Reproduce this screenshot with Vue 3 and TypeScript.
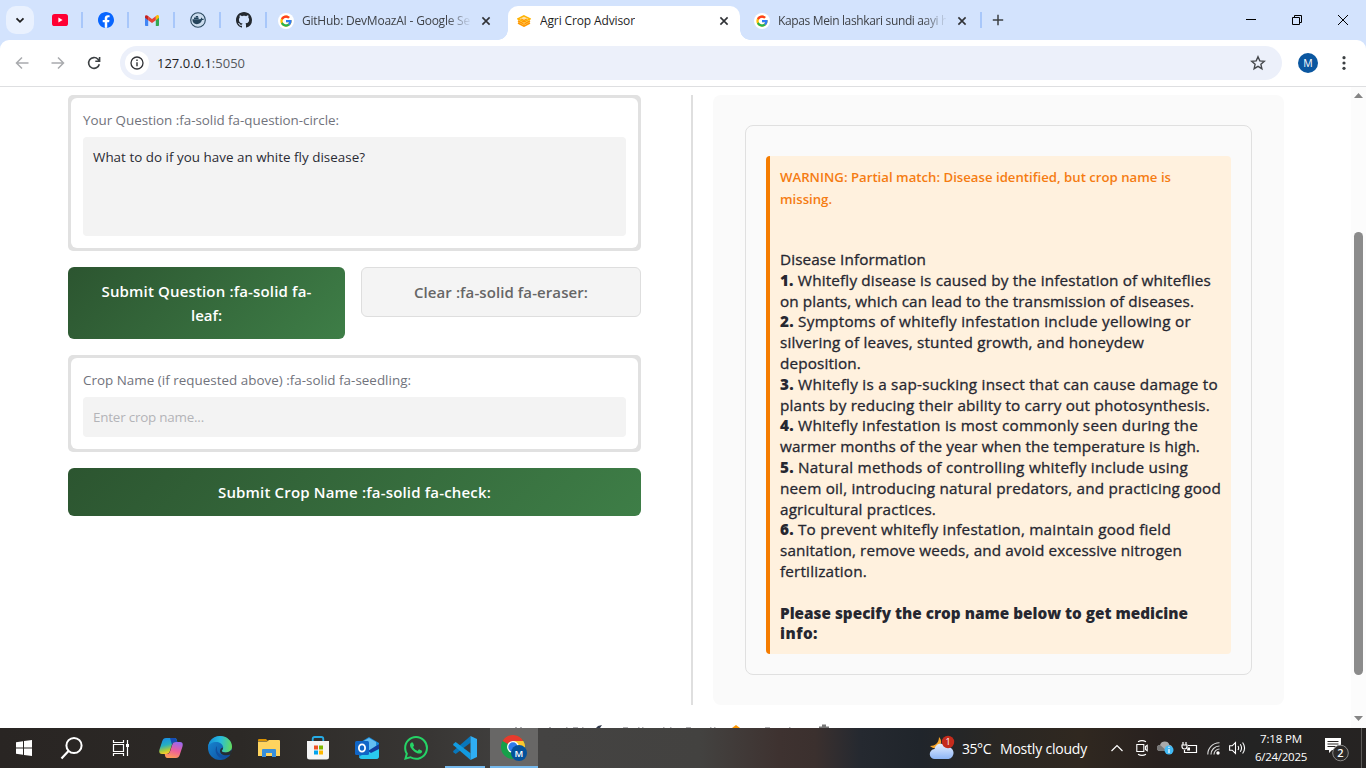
<script setup lang="ts">
interface Line { n?: string; t: string; w: number; strong?: boolean }

// Spreads a line of text evenly so that it fills the given width.
const vFit = {
  mounted(el: HTMLElement, binding: { value: number }) {
    const len = (el.textContent ?? '').trim().length
    if (len > 0) {
      const diff = binding.value - el.getBoundingClientRect().width
      el.style.letterSpacing = `${(diff / len).toFixed(4)}px`
    }
  },
}

const info: Line[] = [
  { t: 'Disease Information', w: 146 },
  { n: '1.', t: 'Whitefly disease is caused by the infestation of whiteflies', w: 431 },
  { t: 'on plants, which can lead to the transmission of diseases.', w: 414 },
  { n: '2.', t: 'Symptoms of whitefly infestation include yellowing or', w: 411 },
  { t: 'silvering of leaves, stunted growth, and honeydew', w: 364 },
  { t: 'deposition.', w: 81 },
  { n: '3.', t: 'Whitefly is a sap-sucking insect that can cause damage to', w: 438 },
  { t: 'plants by reducing their ability to carry out photosynthesis.', w: 430 },
  { n: '4.', t: 'Whitefly infestation is most commonly seen during the', w: 418 },
  { t: 'warmer months of the year when the temperature is high.', w: 420 },
  { n: '5.', t: 'Natural methods of controlling whitefly include using', w: 408 },
  { t: 'neem oil, introducing natural predators, and practicing good', w: 441 },
  { t: 'agricultural practices.', w: 156 },
  { n: '6.', t: 'To prevent whitefly infestation, maintain good field', w: 391 },
  { t: 'sanitation, remove weeds, and avoid excessive nitrogen', w: 402 },
  { t: 'fertilization.', w: 87 },
  { t: '', w: 0 },
  { t: 'Please specify the crop name below to get medicine', w: 408, strong: true },
  { t: 'info:', w: 38, strong: true },
]
</script>

<template>
  <div class="screen">
    <header class="tabs">
      <div class="search-tabs">
        <svg width="28" height="28" viewBox="0 0 28 28"><path d="M10.500 12.300l3.500 3.500 3.500-3.500" fill="none" stroke="#1f1f1f" stroke-width="1.800" /></svg>
      </div>
      <div class="pin">
        <svg width="16" height="12" viewBox="0 0 16 12"><rect width="16" height="12" rx="2.600" fill="#ff0033" /><path d="M6.400 3.500v5l4.200-2.500z" fill="#fff" /></svg>
      </div>
      <div class="pin">
        <svg width="16" height="16" viewBox="0 0 24 24"><circle cx="12" cy="12" r="11" fill="#fff" /><path fill="#0866ff" d="M24 12.073c0-6.627-5.373-12-12-12s-12 5.373-12 12c0 5.990 4.388 10.954 10.125 11.854v-8.385H7.078v-3.470h3.047V9.430c0-3.007 1.792-4.669 4.533-4.669 1.312 0 2.686.235 2.686.235v2.953H15.830c-1.491 0-1.956.925-1.956 1.874v2.250h3.328l-.532 3.470h-2.796v8.385C19.612 23.027 24 18.062 24 12.073z" /></svg>
      </div>
      <div class="pin">
        <svg width="14" height="11" viewBox="0 0 14 11"><path d="M0 1.500v8.700q0 .8.800.8H3.200V4.200z" fill="#4285f4" /><path d="M14 1.500v8.700q0 .8-.8.800H10.800V4.200z" fill="#34a853" /><path d="M10.800 1.200v4L14 2.800V1.600C14 .1 12.300-.5 11.200.7z" fill="#fbbc04" /><path d="M3.200 1.200L7 4l3.800-2.800v4L7 8 3.200 5.200z" fill="#ea4335" /><path d="M0 1.600v1.200l3.200 2.400v-4L2.800.7C1.700-.3 0 .1 0 1.600z" fill="#c5221f" /></svg>
      </div>
      <div class="pin">
        <svg width="16" height="16" viewBox="0 0 16 16"><circle cx="8" cy="8" r="7.300" fill="#cbdcee" stroke="#2c4a60" stroke-width="1.100" /><path d="M2.400 7.300h7.700c.9 0 1.100-.8.900-1.700.8.300 1.200.8 1.300 1.300.6-.1 1.200 0 1.600.3-.5.700-1.200.9-1.900.9-.8 2.500-2.500 4.100-5.200 4.100-2.900 0-4.500-1.900-4.400-4.900zM4 5.600h4.600v1.500H4zM5.800 4h2.300v1.300H5.800z" fill="#24445c" /></svg>
      </div>
      <div class="pin">
        <svg width="16" height="16" viewBox="0 0 16 16"><path fill="#24292f" d="M8 0C3.580 0 0 3.580 0 8c0 3.540 2.290 6.530 5.470 7.590.4.070.55-.17.55-.38 0-.19-.01-.82-.01-1.490-2.010.37-2.530-.49-2.690-.94-.09-.23-.48-.94-.82-1.130-.28-.15-.68-.52-.01-.53.63-.01 1.080.58 1.230.82.72 1.210 1.870.87 2.330.66.07-.52.28-.87.51-1.070-1.780-.2-3.640-.89-3.640-3.950 0-.87.31-1.590.82-2.150-.08-.2-.36-1.020.08-2.120 0 0 .67-.21 2.200.82.64-.18 1.320-.27 2-.27s1.360.09 2 .27c1.530-1.040 2.200-.82 2.200-.82.44 1.100.16 1.920.08 2.120.51.56.82 1.270.82 2.150 0 3.070-1.870 3.750-3.650 3.950.29.25.54.73.54 1.480 0 1.070-.01 1.930-.01 2.200 0 .21.15.46.55.38A8.010 8.010 0 0016 8c0-4.420-3.580-8-8-8z" /></svg>
      </div>
      <div v-for="(tab, i) in [{ t: 'GitHub: DevMoazAI - Google Se', w: 168 }, { t: 'Agri Crop Advisor', w: 95 }, { t: 'Kapas Mein lashkari sundi aayi h', w: 170 }]" :key="i" class="tab" :class="'tab' + i">
        <svg v-if="i !== 1" class="fav" width="16" height="16" viewBox="0 0 64 64">
          <circle cx="32" cy="32" r="32" fill="#fff" />
          <g transform="translate(5 5) scale(1.125)">
            <path fill="#FFC107" d="M43.611,20.083H42V20H24v8h11.303c-1.649,4.657-6.080,8-11.303,8c-6.627,0-12-5.373-12-12c0-6.627,5.373-12,12-12c3.059,0,5.842,1.154,7.961,3.039l5.657-5.657C34.046,6.053,29.268,4,24,4C12.955,4,4,12.955,4,24c0,11.045,8.955,20,20,20c11.045,0,20-8.955,20-20C44,22.659,43.862,21.350,43.611,20.083z" />
            <path fill="#FF3D20" d="M6.306,14.691l6.571,4.819C14.655,15.108,18.961,12,24,12c3.059,0,5.842,1.154,7.961,3.039l5.657-5.657C34.046,6.053,29.268,4,24,4C16.318,4,9.656,8.337,6.306,14.691z" />
            <path fill="#22b455" d="M24,44c5.166,0,9.860-1.977,13.409-5.192l-6.190-5.238C29.211,35.091,26.715,36,24,36c-5.202,0-9.619-3.317-11.283-7.946l-6.522,5.025C9.505,39.556,16.227,44,24,44z" />
            <path fill="#2f7df6" d="M43.611,20.083H42V20H24v8h11.303c-0.792,2.237-2.231,4.166-4.087,5.571l6.190,5.238C36.971,39.205,44,34,44,24C44,22.659,43.862,21.350,43.611,20.083z" />
          </g>
        </svg>
        <svg v-else class="fav" width="14" height="12" viewBox="0 0 14 12"><path d="M7 .7l6 3.100v4.400l-6 3.100-6-3.100V3.800z" fill="#ffe2a6" /><path d="M7 .8l6 3.100-6 3-6-3z" fill="none" stroke="#ffb300" stroke-width="1.500" /><path d="M1 8l6 3.200L13 8M1 5.800l3 1.700M13 5.800l-3 1.700" fill="none" stroke="#ff9800" stroke-width="1.500" /><path d="M4.200 4L7 5.500 9.800 4M4 7.800L7 6.300l3 1.500-3 1.500z" fill="none" stroke="#ff9800" stroke-width="1.200" /></svg>
        <span class="title"><span v-fit="tab.w" class="fit">{{ tab.t }}</span></span>
        <svg class="close" width="10" height="10" viewBox="0 0 10 10"><path d="M1.400 1.400l7.200 7.200M8.600 1.400L1.400 8.600" stroke="#303236" stroke-width="1.600" /></svg>
      </div>
      <div class="new-tab">
        <svg width="12" height="12" viewBox="0 0 12 12"><path d="M6 .8v10.400M.8 6h10.400" stroke="#3c4043" stroke-width="1.500" /></svg>
      </div>
      <div class="win">
        <span><svg width="12" height="12" viewBox="0 0 12 12"><path d="M1 5.500h10" stroke="#000" /></svg></span>
        <span><svg width="12" height="12" viewBox="0 0 12 12"><path d="M1.500 3.500h7v7h-7zM3.500 3.500v-2h7v7h-2" fill="none" stroke="#000" /></svg></span>
        <span><svg width="12" height="12" viewBox="0 0 12 12"><path d="M1 1l10 10M11 1L1 11" stroke="#000" /></svg></span>
      </div>
    </header>

    <div class="toolbar-back">
      <div class="toolbar">
        <div class="nav"><svg width="14" height="14" viewBox="0 0 14 14"><path d="M13.500 7H1.500M7 1.500L1.500 7 7 12.500" fill="none" stroke="#a9abae" stroke-width="1.500" /></svg></div>
        <div class="nav"><svg width="14" height="14" viewBox="0 0 14 14"><path d="M.5 7h12M7 1.500L12.500 7 7 12.500" fill="none" stroke="#a9abae" stroke-width="1.500" /></svg></div>
        <div class="nav"><svg width="14" height="14" viewBox="0 0 14 14"><path d="M12.300 8.200A5.400 5.400 0 1 1 11 3.300L12.400 4.900M12.600 1v4.300H8.300" fill="none" stroke="#3c4043" stroke-width="1.600" /></svg></div>
        <div class="omni">
          <span class="site"><svg width="14" height="14" viewBox="0 0 14 14"><circle cx="7" cy="7" r="6" fill="none" stroke="#303236" stroke-width="1.300" /><path d="M7 6.200v4M7 3.600v1.500" stroke="#303236" stroke-width="1.400" /></svg></span>
          <span class="url"><span v-fit="88" class="fit">127.0.0.1<i>:5050</i></span></span>
          <svg class="star" width="16" height="16" viewBox="0 0 16 16"><path d="M8 1.800l1.800 4.100 4.500.4-3.400 3 1 4.400L8 11.400l-3.900 2.300 1-4.400-3.400-3 4.500-.4z" fill="none" stroke="#45484c" stroke-width="1.400" /></svg>
        </div>
        <div class="me">M</div>
        <svg class="dots" width="4" height="16" viewBox="0 0 4 16"><circle cx="2" cy="2.700" r="1.600" fill="#3c4043" /><circle cx="2" cy="8" r="1.600" fill="#3c4043" /><circle cx="2" cy="13.300" r="1.600" fill="#3c4043" /></svg>
      </div>
    </div>

    <main class="page">
      <section class="form">
        <div class="frame">
          <div class="frame-in">
            <label><span v-fit="256" class="fit">Your Question :fa-solid fa-question-circle:</span></label>
            <div class="field area"><span v-fit="272" class="fit">What to do if you have an white fly disease?</span></div>
          </div>
        </div>
        <div class="row">
          <div class="btn green two"><span v-fit="210" class="fit">Submit Question :fa-solid fa-</span><span v-fit="31" class="fit">leaf:</span></div>
          <div class="btn grey"><span v-fit="174" class="fit">Clear :fa-solid fa-eraser:</span></div>
        </div>
        <div class="frame">
          <div class="frame-in">
            <label><span v-fit="328" class="fit">Crop Name (if requested above) :fa-solid fa-seedling:</span></label>
            <div class="field one"><span v-fit="111" class="fit">Enter crop name...</span></div>
          </div>
        </div>
        <div class="btn green last"><span v-fit="273" class="fit">Submit Crop Name :fa-solid fa-check:</span></div>
      </section>
      <div class="rule"></div>
      <section class="result">
        <div class="outline">
          <div class="notice">
            <div class="warn">
              <div><span v-fit="391" class="fit">WARNING: Partial match: Disease identified, but crop name is</span></div>
              <div><span v-fit="52" class="fit">missing.</span></div>
            </div>
            <div class="info">
              <div v-for="(l, i) in info" :key="i" class="line" :class="{ strong: l.strong }"><span v-fit="l.w" class="fit"><b v-if="l.n">{{ l.n }}</b>{{ l.n ? ' ' : '' }}{{ l.t }}</span></div>
            </div>
          </div>
        </div>
      </section>
      <div class="scroll">
        <svg width="9" height="5" viewBox="0 0 9 5"><path d="M0 5L4.500 0 9 5z" fill="#858585" /></svg>
        <div class="thumb"></div>
        <svg width="9" height="5" viewBox="0 0 9 5"><path d="M0 0h9L4.500 5z" fill="#858585" /></svg>
      </div>
      <svg class="peek" width="320" height="4" viewBox="0 0 320 4">
        <path d="M3 3.500h2M8 3.500h2M37 3.500h2M54 3.500h1.500M61 3.500h5M70 3.500h1.500M111 3.500h5M126 3.500h1.500M130 3.500h1.500M151 3.500h1.500M158 3.500h1.500M174 3.500h5M198 3.500h1.500M202 3.500h1.500M253 3.500h5M277 3.500h1.500" stroke="#b4b4b7" />
        <path d="M84 4l2-2 4-1-2 3z" fill="#30394a" /><path d="M220 4l4-3 4 3z" fill="#ff9800" /><path d="M307 4V2.500h3V.500h4v2h3V4z" fill="#777" />
      </svg>
    </main>

    <footer class="taskbar">
      <div class="apps">
        <span><svg width="16" height="16" viewBox="0 0 16 16"><path d="M0 2.200L7 1.200v6.300H0zM8 1l8-1v7.500H8zM0 8.500h7v6.300l-7-1zM8 8.500h8V16l-8-1.100z" fill="#fff" /></svg></span>
        <span><svg width="24" height="24" viewBox="0 0 24 24"><circle cx="14" cy="9.500" r="7.600" fill="none" stroke="#fff" stroke-width="2" /><path d="M8.500 15L1.500 22.500" stroke="#fff" stroke-width="2.200" /></svg></span>
        <span class="tv"><svg width="18" height="18" viewBox="0 0 18 18"><path d="M1.500 1v2.500h10V1M1.500 17v-2.500h10V17M1.500 5.500h10v7h-10zM15.500 1v16" fill="none" stroke="#fff" stroke-width="1.200" /><path d="M14 5h3v3h-3z" fill="#fff" /></svg></span>
        <span><svg width="24" height="22" viewBox="0 0 24 22">
          <defs><linearGradient id="c1" x1="0" y1="0" x2=".3" y2="1"><stop offset="0" stop-color="#1686ee" /><stop offset=".5" stop-color="#25afc0" /><stop offset=".8" stop-color="#a8ca3d" /><stop offset="1" stop-color="#ffcb28" /></linearGradient><linearGradient id="c2" x1=".6" y1="0" x2=".3" y2="1"><stop offset="0" stop-color="#9c68ed" /><stop offset=".5" stop-color="#ee5e9b" /><stop offset="1" stop-color="#ff9d55" /></linearGradient></defs>
          <path d="M7 1h8.500c2 0 2.200 1.500 2.800 4h-2c-2.300 0-3 1-3.500 3l-1.700 5.500c-.7 2.300-1.600 3.500-4 3.500H3c-2.700 0-3.200-2-2.500-4.500L3.300 4C4 2 5 1 7 1z" fill="url(#c1)" /><path d="M11 1h4.500c2 0 2.200 1.500 2.800 4h-2c-2 0-2.800.8-3.400 2.500z" fill="#164db5" /><path d="M17 21H8.500c-2 0-2.300-1.600-2.800-4h2c2.300 0 3-1.200 3.600-3.200L13 8.500C13.700 6 14.700 5 17 5h4c2.700 0 3.100 2 2.500 4.400L20.700 18c-.7 2-1.700 3-3.700 3z" fill="url(#c2)" /></svg></span>
        <span><svg width="24" height="24" viewBox="0 0 24 24">
          <defs><linearGradient id="e1" x1="0" y1=".4" x2="1" y2=".5"><stop offset="0" stop-color="#168ed8" /><stop offset=".5" stop-color="#28bcdd" /><stop offset="1" stop-color="#64db5c" /></linearGradient><linearGradient id="e2" x1="0" y1="0" x2="1" y2="1"><stop offset="0" stop-color="#198bd5" /><stop offset="1" stop-color="#0b4a9b" /></linearGradient></defs>
          <circle cx="12" cy="12" r="12" fill="url(#e2)" /><path d="M0 11C.8 4.500 6 0 12 0c7 0 12 5 12 10.500 0 4-3 6-6.500 6-2.400 0-3.700-.8-3.700-1.700 0-.7 1.400-1.200 1.400-3.300C15.200 8.500 12 6 8.500 6 4 6 1 8 0 11z" fill="url(#e1)" /><path d="M9 10c-3.500 4.500 0 12 6 12.500 3 0 6-1.800 7.500-4-1.500.8-3 1.200-5 1.200-5 0-8.500-3-8.500-6.500z" fill="#114f9f" /><path d="M13.800 14.800c0 1 1.400 1.700 3.700 1.700 2.200 0 4.600-.8 5.700-2.700l.7 1.200-1.400 3.500c-3.500 1.500-8.500 1-10-1.800-1.200-2.200.2-4.500 2.300-5.200.3 1.500-.2 2-.6 2.400-.3.300-.4.500-.4.900z" fill="#29241f" opacity=".85" /></svg></span>
        <span><svg width="22" height="20" viewBox="0 0 22 20"><path d="M0 3V1.500Q0 1 1 1h7l2 2z" fill="#db9200" /><path d="M0 3.500h9l2-1.500h10q1 0 1 1v15H0z" fill="#ffd45f" /><path d="M4 19v-7q0-1 1-1h12q1 0 1 1v7h-4v-4H8v4z" fill="#388fdb" /></svg></span>
        <span><svg width="24" height="24" viewBox="0 0 24 24"><path d="M6.700 7V3q0-2 2-2h6.600q2 0 2 2v4" fill="none" stroke="#26ace6" stroke-width="1.800" /><path d="M1 5h22v16q0 2.500-2.500 2.500h-17Q1 23.500 1 21z" fill="#f5f5f5" /><path d="M8 9.500h4v4H8z" fill="#f05123" /><path d="M13 9.500h4v4h-4z" fill="#7eb900" /><path d="M8 14.500h4v4H8z" fill="#00a3ee" /><path d="M13 14.500h4v4h-4z" fill="#ffb800" /></svg></span>
        <span><svg width="24" height="22" viewBox="0 0 24 22"><path d="M4 6L14 0l10 6v13q0 3-3 3H7q-3 0-3-3z" fill="#1687d9" /><path d="M7 5l7-4 7 4v8H7z" fill="#62bdf2" /><path d="M24 7v12q0 3-3 3H7q-2 0-3-2z" fill="#2ac8ee" /><path d="M24 7L13 14l3 2 8-4z" fill="#123c9e" /><rect y="4" width="14" height="14" rx="1.500" fill="#1066c7" /><ellipse cx="7" cy="11" rx="3.100" ry="3.600" fill="none" stroke="#fff" stroke-width="1.800" /></svg></span>
        <span><svg width="24" height="24" viewBox="0 0 24 24"><path fill="#25d366" d="M17.472 14.382c-.297-.149-1.758-.867-2.030-.967-.273-.099-.471-.148-.67.150-.197.297-.767.966-.94 1.164-.173.199-.347.223-.644.075-.297-.15-1.255-.463-2.390-1.475-.883-.788-1.480-1.761-1.653-2.059-.173-.297-.018-.458.130-.606.134-.133.298-.347.446-.52.149-.174.198-.298.298-.497.099-.198.050-.371-.025-.52-.075-.149-.669-1.612-.916-2.207-.242-.579-.487-.5-.669-.510-.173-.008-.371-.010-.570-.010-.198 0-.52.074-.792.372-.272.297-1.040 1.016-1.040 2.479 0 1.462 1.065 2.875 1.213 3.074.149.198 2.096 3.200 5.077 4.487.709.306 1.262.489 1.694.625.712.227 1.360.195 1.871.118.571-.085 1.758-.719 2.006-1.413.248-.694.248-1.289.173-1.413-.074-.124-.272-.198-.570-.347m-5.421 7.403h-.004a9.870 9.870 0 01-5.031-1.378l-.361-.214-3.741.982.998-3.648-.235-.374a9.860 9.860 0 01-1.510-5.260c.001-5.450 4.436-9.884 9.888-9.884 2.640 0 5.122 1.030 6.988 2.898a9.825 9.825 0 012.893 6.994c-.003 5.450-4.437 9.884-9.885 9.884m8.413-18.297A11.815 11.815 0 0012.050 0C5.495 0 .160 5.335.157 11.892c0 2.096.547 4.142 1.588 5.945L.057 24l6.305-1.654a11.882 11.882 0 005.683 1.448h.005c6.554 0 11.890-5.335 11.893-11.893a11.821 11.821 0 00-3.480-8.413z" /></svg></span>
        <span class="run"><svg width="24" height="24" viewBox="0 0 24 24"><path d="M17.500 0v6.800L2.700 18 .5 16.200q-.7-.7 0-1.400z" fill="#0877bb" /><path d="M17.500 24v-6.800L2.700 6 .5 7.800q-.7.700 0 1.400z" fill="#129be0" /><path d="M17.500 0L24 3v18l-6.500 3z" fill="#2faef4" /></svg></span>
        <span class="run active"><svg width="26" height="26" viewBox="0 0 26 26"><circle cx="12" cy="12" r="12" fill="#16a04a" /><path d="M12 12L1.600 6A12 12 0 0 1 22.400 6H12z" fill="#e63a2e" /><path d="M22.400 6A12 12 0 0 1 12 24l5.200-9L12 6z" fill="#fdc72f" /><circle cx="12" cy="12" r="6" fill="#fff" /><circle cx="12" cy="12" r="4.700" fill="#2f7bea" /><circle cx="18" cy="18" r="8" fill="#04519b" /><text x="18" y="21.500" text-anchor="middle" font-size="9.500" font-weight="600" fill="#fff">M</text></svg></span>
      </div>
      <div class="weather">
        <svg width="26" height="26" viewBox="0 0 26 26"><defs><linearGradient id="w1" x1="0" y1="0" x2="0" y2="1"><stop offset="0" stop-color="#e6efff" /><stop offset="1" stop-color="#8db5f5" /></linearGradient></defs><path d="M10 2c3 3 3 8-1 10-3 2-6 1-8-1 5 0 9-3 9-9z" fill="#f9a72b" /><path d="M6 24a5 5 0 0 1-.5-10 6.500 6.500 0 0 1 12-2 6 6 0 0 1 2 12z" fill="url(#w1)" /><circle cx="19" cy="7" r="6.200" fill="#c42b1c" /><text x="19" y="10.200" text-anchor="middle" font-size="9" fill="#fff">1</text></svg>
        <span class="deg"><span v-fit="29" class="fit">35°C</span></span>
        <span class="cond"><span v-fit="87" class="fit">Mostly cloudy</span></span>
      </div>
      <div class="tray">
        <svg width="12" height="8" viewBox="0 0 12 8"><path d="M.5 7L6 1.500 11.500 7" fill="none" stroke="#fff" stroke-width="1.200" /></svg>
        <svg class="cam" width="12" height="16" viewBox="0 0 12 16"><path d="M2 1.700Q6-.5 10 1.700M2 14.300q4 2.200 8 0M.8 4.500h7v7h-7zM9.500 6.500l1.700-1.200v5.400L9.500 9.500z" fill="none" stroke="#fff" stroke-width="1.100" /></svg>
        <svg width="17" height="14" viewBox="0 0 17 14"><path d="M3 10a3 3 0 0 1 0-6 5 5 0 0 1 9.500 0c2 0 3 1.500 2.500 3.500L9 10z" fill="#aaa" /><path d="M3 10a3 3 0 0 1 0-6l7 6z" fill="#777" /><circle cx="12" cy="9" r="4.500" fill="#42baf5" /><path d="M12 8v4M12 5.800v1.200" stroke="#fff" stroke-width="1.200" /></svg>
        <svg class="power" width="17" height="13" viewBox="0 0 17 13"><path d="M7 3.500h8.500v7H3.500V8M2 0v3M5 0v3M1 3h5v1.500Q6 7 3.500 7 1 7 1 4.500z" fill="none" stroke="#fff" stroke-width="1.200" /><path d="M6.500 5.500H9v3H6z" fill="#fff" /></svg>
        <svg width="13" height="13" viewBox="0 0 13 13"><path d="M.8 12.500A11.500 11.500 0 0 1 12.500.8M4 12.500A8.500 8.500 0 0 1 12.500 4M7 12.500A5.500 5.500 0 0 1 12.500 7" fill="none" stroke="#ddd" stroke-width="1.100" /><circle cx="11" cy="11" r="1.700" fill="#fff" /></svg>
        <svg width="17" height="14" viewBox="0 0 17 14"><path d="M.6 4.800h2.600L6.500 1.500v11L3.200 9.200H.6zM9 5q1.300 2 0 4M11.300 3.200q2.500 3.800 0 7.600M13.600 1.500q4 5.500 0 11" fill="none" stroke="#fff" stroke-width="1.100" /></svg>
      </div>
      <div class="clock"><span v-fit="42" class="fit">7:18 PM</span><span v-fit="52" class="fit">6/24/2025</span></div>
      <div class="notes"><svg width="26" height="26" viewBox="0 0 26 26"><path d="M1 1h16v12H8l-3 3v-3H1z" fill="#fff" /><path d="M3.500 4.500h11M3.500 7h11M3.500 9.500h8" stroke="#2b2826" /><circle cx="16.500" cy="16" r="7.800" fill="#2c2a29" stroke="#8b8a89" /><text x="16.500" y="20" text-anchor="middle" font-size="11" font-weight="600" fill="#fff">2</text></svg></div>
      <div class="peek-edge"></div>
    </footer>
  </div>
</template>

<style>
html, body { margin: 0; overflow: hidden; }
</style>

<style scoped>
.screen { width: 1366px; height: 768px; overflow: hidden; background: #fff; font-family: "Open Sans", "Noto Sans", sans-serif; display: flex; flex-direction: column; }
.screen * { box-sizing: border-box; }
svg { display: block; flex: none; }
.fit { display: inline-block; white-space: nowrap; }
.tabs { height: 40px; flex: none; background: #d3e3fd; display: flex; align-items: flex-start; }
.search-tabs { width: 28px; height: 28px; margin: 6px 3px 0 6px; background: #e9f1fe; border-radius: 10px; }
.pin { width: 46px; height: 16px; margin-top: 12px; display: flex; align-items: center; justify-content: center; border-right: 2px solid #a8c7fa; padding-left: 2px; }
.tab { height: 34px; margin-top: 6px; display: flex; align-items: center; padding-bottom: 5px; font-size: 12px; color: #3f4247; }
.tab .title { overflow: hidden; flex: none; margin-left: 8px; line-height: 20px; }
.tab .close { margin-left: auto; }
.tab0 { width: 240px; margin-left: 1px; padding-left: 10px; padding-right: 17px; }
.tab1 { width: 232px; padding-left: 9px; padding-right: 11px; background: #fff; border-radius: 10px 10px 0 0; color: #1f1f1f; position: relative; }
.tab1::before, .tab1::after { content: ""; position: absolute; bottom: 0; width: 10px; height: 10px; }
.tab1::before { left: -10px; background: radial-gradient(circle at 0 0, transparent 9.500px, #fff 10px); }
.tab1::after { right: -10px; background: radial-gradient(circle at 100% 0, transparent 9.500px, #fff 10px); }
.tab2 { width: 242px; padding-left: 14px; padding-right: 15px; position: relative; }
.tab2::after { content: ""; position: absolute; right: 0; top: 6px; width: 2px; height: 16px; background: #a8c7fa; }
.tab0 .title, .tab2 .title { width: 168px; -webkit-mask-image: linear-gradient(to right, #000 86%, transparent 101%); mask-image: linear-gradient(to right, #000 86%, transparent 101%); }
.tab1 .title { margin-left: 9px; }
.new-tab { margin: 14px 0 0 10px; }
.win { margin-left: auto; display: flex; height: 40px; }
.win span { width: 46px; display: flex; align-items: center; justify-content: center; }
.toolbar-back { background: #d3e3fd; flex: none; height: 47px; }
.toolbar { height: 47px; background: #fff; border-radius: 9px 9px 0 0; border-bottom: 1px solid #dedfe1; display: flex; align-items: center; padding-left: 4px; }
.nav { width: 36px; display: flex; justify-content: center; }
.omni { width: 1162px; height: 34px; margin-left: 8px; background: #ecf0fa; border-radius: 17px; display: flex; align-items: center; padding: 0 16px 0 5px; }
.site { width: 24px; height: 24px; border-radius: 50%; background: #fff; display: flex; align-items: center; justify-content: center; }
.url { margin-left: 8px; font-size: 13px; color: #1f1f1f; }
.url i { font-style: normal; color: #55585d; }
.star { margin-left: auto; }
.me { width: 20px; height: 20px; margin-left: 16px; border-radius: 50%; background: #0b57a0; color: #fff; font-size: 10.500px; line-height: 20px; text-align: center; }
.dots { margin-left: 24px; }
.page { flex: 1; min-height: 0; display: flex; align-items: flex-start; padding-left: 68px; position: relative; overflow: hidden; }
.form { width: 573px; padding-top: 8px; }
.frame { background: #e1e1e1; border-radius: 5px; padding: 3px; }
.frame-in { background: #fff; border-radius: 6px; padding: 11px 12px 12px; }
label { display: block; height: 28px; line-height: 22px; font-size: 13.400px; color: #71737c; }
.field { background: #f3f3f3; border-radius: 4px; padding: 8px 10px; width: 543px; font-size: 13.400px; line-height: 24px; }
.area { height: 99px; color: #2a2b33; }
.one { height: 40px; color: #b3b4b8; }
.row { display: flex; align-items: flex-start; gap: 16px; margin: 16px 0 16px; }
.btn { border-radius: 6px; text-align: center; font-size: 15px; line-height: 24px; font-weight: 600; display: flex; flex-direction: column; align-items: center; justify-content: center; }
.green { background: linear-gradient(135deg, #2c5530, #3e7e47); color: #fff; }
.two { width: 277px; height: 72px; }
.grey { width: 280px; height: 50px; background: #f4f4f4; border: 1px solid #dedede; color: #666; }
.last { height: 48px; margin-top: 16px; }
.rule { width: 2px; height: 610px; margin: 8px 0 0 50px; background: #dfdfdf; }
.result { width: 571px; height: 610px; margin: 8px 0 0 20px; background: #fafafa; border-radius: 8px; padding: 30px 32px; }
.outline { height: 550px; border: 1px solid #e0e0e0; border-radius: 8px; padding: 30px 20px 20px; }
.notice { height: 498px; background: #fff1de; border-left: 4px solid #f57c00; border-radius: 4px; padding: 10px 0 0 10px; }
.warn { font-size: 13.200px; line-height: 22px; font-weight: 600; color: #f57c12; height: 83px; }
.warn div { height: 22px; }
.info { font-size: 15.300px; line-height: 20.800px; color: #262730; -webkit-text-stroke: .3px #262730; }
.line { height: 20.800px; white-space: nowrap; }
.line b, .strong { font-weight: 800; -webkit-text-stroke: 0; }
.scroll { width: 15px; height: 641px; margin-left: auto; background: #fcfcfc; display: flex; flex-direction: column; align-items: center; padding-top: 6px; }
.thumb { width: 9px; height: 443px; border-radius: 5px; background: #8b8b8b; margin: 134px 0 41px; }
.peek { position: absolute; left: 512px; bottom: 0; }
.taskbar { height: 40px; flex: none; display: flex; align-items: center; color: #fff; background: linear-gradient(90deg, #292523 0, #2c2926 240px, #383634 430px, #444342 540px, #434240 700px, #3e3230 780px, #3b302e 815px, #252930 860px, #20252b 920px, #2a2723 1000px, #302820 1080px, #28211f 1160px, #232323 1250px, #262322 1366px); }
.apps { display: flex; height: 40px; }
.apps span { width: 49px; height: 40px; display: flex; align-items: center; justify-content: center; }
.apps span:nth-child(1), .apps span:nth-child(2) { width: 48px; }
.apps span:nth-child(4) { margin-left: 1px; }
.apps .run { box-shadow: inset 0 -2px #76b9ed; width: 40px; margin: 0 4px 0 5px; }
.apps .active { background: #686766; width: 48px; margin: 0 0 0 1px; }
.weather { display: flex; align-items: center; margin-left: 391px; font-size: 14px; }
.deg { margin-left: 7px; width: 30px; }
.cond { margin-left: 8px; }
.tray { display: flex; align-items: center; gap: 9px; margin-left: 24px; }
.tray .cam { margin-left: 4px; }
.tray .power { margin-left: -2px; }
.clock { width: 62px; margin-left: 4px; display: flex; flex-direction: column; align-items: center; font-size: 11.500px; line-height: 18px; }
.notes { margin-left: 12px; padding-top: 4px; }
.peek-edge { width: 1px; height: 40px; margin-left: auto; margin-right: 4px; background: #5c5a58; }
</style>
